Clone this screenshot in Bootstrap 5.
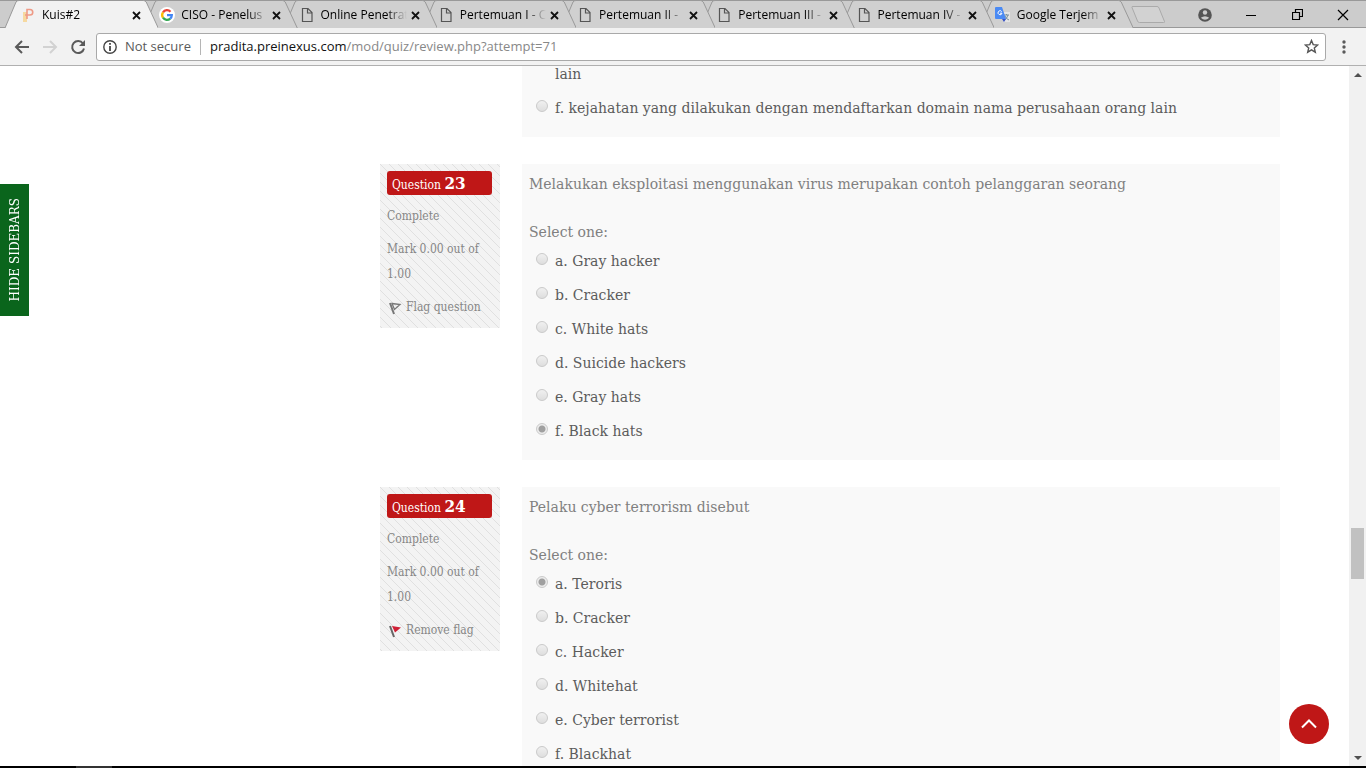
<!DOCTYPE html>
<html lang="id">
<head>
<meta charset="utf-8">
<meta name="viewport" content="width=device-width, initial-scale=1">
<title>Kuis#2</title>
<link href="https://cdn.jsdelivr.net/npm/bootstrap@5.3.0/dist/css/bootstrap.min.css" rel="stylesheet">
<style>
  :root { --slab: "Roboto Slab", "DejaVu Serif", serif; --slab-narrow: "Roboto Slab", "DejaVu Serif Condensed", serif; --ui: "Segoe UI", "Open Sans", "Noto Sans", sans-serif; --brand: #bf1717; }
  body { font-family: var(--slab); background: #fff; }
  button { background: none; border: 0; padding: 0; }
  svg { display: block; flex: none; }

  /* browser frame */
  .chrome { font-family: var(--ui); background: #f2f2f2; border-bottom: 1px solid #b0b0b0; color: #000; }
  .tabstrip { height: 28px; background: #ccc; padding-left: 5px; border-top: 1px solid #999; box-shadow: inset 0 -1px #999; }
  .tab-item { position: relative; flex: 1 1 0; min-width: 0; height: 28px; margin: -1px -14px 0 0; padding: 2px 17px 0 15px; font-size: 12px; line-height: 26px; }
  .tab-item:nth-child(1) { z-index: 9; }
  .tab-item:nth-child(2) { z-index: 8; }
  .tab-item:nth-child(3) { z-index: 7; }
  .tab-item:nth-child(4) { z-index: 6; }
  .tab-item:nth-child(5) { z-index: 5; }
  .tab-item:nth-child(6) { z-index: 4; }
  .tab-item:nth-child(7) { z-index: 3; }
  .tab-item:nth-child(8) { z-index: 2; margin-right: 0; }
  .tab-shape { position: absolute; inset: 0; width: 100%; height: 28px; z-index: -1; }
  .tab-title { flex: 1 1 0; min-width: 0; overflow: hidden; white-space: nowrap; color: #000; text-decoration: none; margin: 0 4px 0 6px; -webkit-mask-image: linear-gradient(90deg, #000 calc(100% - 20px), transparent); mask-image: linear-gradient(90deg, #000 calc(100% - 20px), transparent); }
  .win-controls { flex: none; width: 235px; margin-left: -2px; }
  .win-btn { width: 46px; height: 26px; display: flex; align-items: center; justify-content: center; }
  .toolbar { height: 37px; padding: 0 14px 0 13px; gap: 10px; }
  .menu-btn { width: 16px; }
  .omnibox { height: 28px; background: #fff; border: 1px solid #a9a9a9; border-radius: 3px; font-size: 13px; padding: 0 6px; color: #5a5a5a; margin-left: -1px; }
  .omnibox .divider { width: 1px; height: 16px; background: #b5b5b5; margin: 0 9px; }
  .address { color: #888; text-decoration: none; }
  .address span { color: #111; }

  /* page */
  .viewport { position: relative; min-height: 0; }
  .review { overflow: hidden; padding: 0 69px 0 380px; }
  .question { margin-bottom: 27px; gap: 22px; }
  .question:first-child { margin-top: -9px; }
  .q-info { flex: 0 0 120px; padding: 7px 7px 8px; font-size: 12px; line-height: 25px; color: #868686; background: linear-gradient(45deg, transparent 45%, #e0e0e0 45%, #e0e0e0 55%, transparent 55%) 0 0 / 9px 9px #f3f3f3; font-family: var(--slab-narrow); }
  .q-info p { margin: 0 0 8px; }
  .q-no { background: var(--brand); color: #fff; border-radius: 3px; height: 24px; padding-left: 5px; margin: 0 1px 9px 0; font-size: 12px; line-height: 25px; font-weight: 500; }
  .q-no span { font-size: 17px; line-height: 24px; font-weight: 700; }
  .flag { color: inherit; text-decoration: none; gap: 4px; padding-left: 2px; }
  .q-body { background: #f9f9f9; padding: 8px 7px 12px; color: #808080; font-size: 14px; line-height: 24px; min-width: 0; }
  .q-body.tail { padding-top: 0; }
  .q-text { margin: 0 0 24px; }
  .answers { padding-left: 7px; }
  .answer { line-height: 34px; gap: 7px; color: #5c5c5c; }
  .answer input { appearance: none; flex: none; width: 12px; height: 12px; margin: 0 0 5px; border: 1px solid #cacaca; border-radius: 50%; background: linear-gradient(#f0f0f0, #dedede); opacity: 1; }
  .answer input:checked { background: radial-gradient(circle, #a0a0a0 0 3px, #ededed 4px); }
  .answer label { opacity: 1; }
  .wrapped { padding-left: 19px; }
  .hide-side { position: absolute; left: 0; top: 118px; width: 29px; height: 132px; background: #0a651c; color: #fff; font-size: 12px; writing-mode: vertical-rl; }
  .hide-side span { transform: rotate(180deg); }
  .to-top { position: absolute; right: 37px; bottom: 22px; width: 40px; height: 40px; border-radius: 50%; background: var(--brand); }
  .scroll-rail { position: relative; flex: 0 0 17px; background: #f1f1f1; padding: 7px 0 6px; }
  .scroll-thumb { position: absolute; top: 66%; left: 2px; width: 13px; height: 51px; background: #c1c1c1; }
  .taskbar { flex: none; height: 2px; background: #000; padding-left: 76px; }
  .taskbar div { width: 36px; height: 2px; background: #333; }
</style>
</head>
<body class="vh-100 overflow-hidden d-flex flex-column">

<svg width="0" height="0" class="position-absolute" aria-hidden="true">
  <defs>
    <g id="tab"><path d="M0 28 L11 2 Q12 .5 14 .5 H138 Q140 .5 141 2 L153 28" stroke="#999" vector-effect="non-scaling-stroke"/></g>
    <g id="x"><path d="M1 1 L8 8 M8 1 L1 8" stroke="#111" stroke-width="1.8"/></g>
    <g id="page"><path d="M3.500 1.500 H9 L13 5.500 V14.500 H3.500 Z M8.500 1.500 V6 H13" fill="none" stroke="#555" stroke-width="1.200"/></g>
  </defs>
</svg>

<header class="chrome flex-shrink-0">
  <div class="tabstrip d-flex">
    <nav class="d-flex flex-grow-1" aria-label="Tabs">
      <div class="tab-item d-flex align-items-center">
        <svg class="tab-shape" viewBox="0 0 153 28" preserveAspectRatio="none" fill="#f2f2f2"><use href="#tab"/></svg>
        <svg width="16" height="16"><path d="M3 5h4v10H3z" fill="#f6d9a0"/><path d="M7 12V2.500h3a2.700 2.700 0 0 1 0 5.500H5" fill="none" stroke="#ee9a86" stroke-width="1.600"/></svg>
        <a class="tab-title" href="#">Kuis#2</a>
        <button aria-label="Close tab"><svg width="9" height="9"><use href="#x"/></svg></button>
      </div>
      <div class="tab-item d-flex align-items-center">
        <svg class="tab-shape" viewBox="0 0 153 28" preserveAspectRatio="none" fill="#d0d0d0"><use href="#tab"/></svg>
        <svg width="16" height="16"><circle cx="8" cy="8" r="8" fill="#fff"/><g fill="none" stroke-width="2.300"><path d="M4 5.300A4.800 4.800 0 0 1 11.500 4.700" stroke="#ea4335"/><path d="M4 5.300A4.800 4.800 0 0 0 4 10.700" stroke="#fbbc05"/><path d="M4 10.700A4.800 4.800 0 0 0 11.200 11.600" stroke="#34a853"/><path d="M8 8.200H12.800A4.800 4.800 0 0 1 11.200 11.600" stroke="#4285f4"/></g></svg>
        <a class="tab-title" href="#">CISO - Penelus</a>
        <button aria-label="Close tab"><svg width="9" height="9"><use href="#x"/></svg></button>
      </div>
      <div class="tab-item d-flex align-items-center">
        <svg class="tab-shape" viewBox="0 0 153 28" preserveAspectRatio="none" fill="#d0d0d0"><use href="#tab"/></svg>
        <svg width="16" height="16"><use href="#page"/></svg>
        <a class="tab-title" href="#">Online Penetrat</a>
        <button aria-label="Close tab"><svg width="9" height="9"><use href="#x"/></svg></button>
      </div>
      <div class="tab-item d-flex align-items-center">
        <svg class="tab-shape" viewBox="0 0 153 28" preserveAspectRatio="none" fill="#d0d0d0"><use href="#tab"/></svg>
        <svg width="16" height="16"><use href="#page"/></svg>
        <a class="tab-title" href="#">Pertemuan I - C</a>
        <button aria-label="Close tab"><svg width="9" height="9"><use href="#x"/></svg></button>
      </div>
      <div class="tab-item d-flex align-items-center">
        <svg class="tab-shape" viewBox="0 0 153 28" preserveAspectRatio="none" fill="#d0d0d0"><use href="#tab"/></svg>
        <svg width="16" height="16"><use href="#page"/></svg>
        <a class="tab-title" href="#">Pertemuan II - </a>
        <button aria-label="Close tab"><svg width="9" height="9"><use href="#x"/></svg></button>
      </div>
      <div class="tab-item d-flex align-items-center">
        <svg class="tab-shape" viewBox="0 0 153 28" preserveAspectRatio="none" fill="#d0d0d0"><use href="#tab"/></svg>
        <svg width="16" height="16"><use href="#page"/></svg>
        <a class="tab-title" href="#">Pertemuan III - </a>
        <button aria-label="Close tab"><svg width="9" height="9"><use href="#x"/></svg></button>
      </div>
      <div class="tab-item d-flex align-items-center">
        <svg class="tab-shape" viewBox="0 0 153 28" preserveAspectRatio="none" fill="#d0d0d0"><use href="#tab"/></svg>
        <svg width="16" height="16"><use href="#page"/></svg>
        <a class="tab-title" href="#">Pertemuan IV - </a>
        <button aria-label="Close tab"><svg width="9" height="9"><use href="#x"/></svg></button>
      </div>
      <div class="tab-item d-flex align-items-center">
        <svg class="tab-shape" viewBox="0 0 153 28" preserveAspectRatio="none" fill="#d0d0d0"><use href="#tab"/></svg>
        <svg width="16" height="16"><path d="M7 5h8v10H9z" fill="#e4e4e4"/><path d="M9 8h5M11.500 7v1M13 8q-1 4-4 5M10 9q1 3 4 4" fill="none" stroke="#78909c"/><path d="M1 0h6l4 12H1Q0 12 0 11V1Q0 0 1 0z" fill="#4a8af4"/><path d="M7 12h4l-2 3z" fill="#3a53c5"/><path d="M6.700 4.600A2 2 0 1 0 7 6.200H5" fill="none" stroke="#fff"/></svg>
        <a class="tab-title" href="#">Google Terjem</a>
        <button aria-label="Close tab"><svg width="9" height="9"><use href="#x"/></svg></button>
      </div>
    </nav>
    <div class="win-controls d-flex align-items-center">
      <button class="me-auto" aria-label="New tab"><svg width="36" height="20" viewBox="0 0 36 20"><path d="M1 2.500Q.5 1.500 2 1.500H26Q27.500 1.500 28 3L33.500 16.500Q34 17.500 32.500 17.500H8.500Q7 17.500 6.500 16Z" fill="#d2d2d2" stroke="#aaa"/></svg></button>
      <button class="win-btn" aria-label="Profile"><svg width="14" height="14"><circle cx="7" cy="7" r="6.800" fill="#555"/><circle cx="7" cy="4.500" r="2.200" fill="#ccc"/><path d="M2.800 9.800Q7 6.500 11.200 9.800Q7 13.500 2.800 9.800Z" fill="#ccc"/></svg></button>
      <button class="win-btn" aria-label="Minimize"><svg width="12" height="12"><path d="M1 6.500H11" stroke="#000"/></svg></button>
      <button class="win-btn" aria-label="Restore"><svg width="11" height="11"><path d="M.5 3.500h7v7h-7zM3.500 3V.5h7v7H8" fill="none" stroke="#000" stroke-width="1.200"/></svg></button>
      <button class="win-btn" aria-label="Close"><svg width="12" height="12"><path d="M1 1 11 11M11 1 1 11" stroke="#000" stroke-width="1.200"/></svg></button>
    </div>
  </div>
  <div class="toolbar d-flex align-items-center">
    <button aria-label="Back"><svg width="18" height="16"><path d="M16 8H3M9 2 3 8l6 6" fill="none" stroke="#5a5a5a" stroke-width="2"/></svg></button>
    <button aria-label="Forward"><svg width="18" height="16"><path d="M2 8H15M9 2l6 6-6 6" fill="none" stroke="#d2d2d2" stroke-width="2"/></svg></button>
    <button aria-label="Reload"><svg width="18" height="16"><path d="M14 4.500A6 6 0 1 0 15 9.500" fill="none" stroke="#5a5a5a" stroke-width="2"/><path d="M16 1V7H10Z" fill="#5a5a5a"/></svg></button>
    <div class="omnibox d-flex align-items-center flex-grow-1">
      <svg width="14" height="14"><circle cx="7" cy="7" r="6.200" fill="none" stroke="#444" stroke-width="1.400"/><path d="M7 6v5M7 3v1.800" stroke="#444" stroke-width="1.800"/></svg>
      <span class="ms-1 ps-1">Not secure</span>
      <span class="divider"></span>
      <a class="address flex-grow-1" href="#"><span>pradita.preinexus.com</span>/mod/quiz/review.php?attempt=71</a>
      <button aria-label="Bookmark"><svg width="15" height="15" viewBox="0 0 15 15"><path d="M7.500 1.500 9.200 5.600 13.700 6 10.300 8.900 11.300 13.200 7.500 10.900 3.700 13.200 4.700 8.900 1.300 6 5.800 5.600Z" fill="none" stroke="#555" stroke-width="1.400"/></svg></button>
    </div>
    <button class="menu-btn d-flex justify-content-center" aria-label="Menu"><svg width="4" height="14" fill="#5a5a5a"><circle cx="2" cy="2" r="1.700"/><circle cx="2" cy="7" r="1.700"/><circle cx="2" cy="12" r="1.700"/></svg></button>
  </div>
</header>

<div class="viewport d-flex flex-grow-1">
  <main class="review flex-grow-1">
    <article class="question d-flex align-items-start">
      <div class="q-info invisible py-0"></div>
      <div class="q-body tail flex-grow-1">
        <div class="answers">
          <div class="answer wrapped">lain</div>
          <div class="answer d-flex align-items-center"><input type="radio" name="q22" id="q22f" disabled><label for="q22f">f. kejahatan yang dilakukan dengan mendaftarkan domain nama perusahaan orang lain</label></div>
        </div>
      </div>
    </article>

    <article class="question d-flex align-items-start">
      <div class="q-info">
        <h3 class="q-no">Question <span>23</span></h3>
        <p>Complete</p>
        <p>Mark 0.00 out of 1.00</p>
        <a class="flag d-flex align-items-center" href="#"><svg width="13" height="14"><path d="M1 2 5 13" stroke="#777" stroke-width="2"/><path d="M3 2.500 11 3.500 5.500 8.500Z" fill="none" stroke="#777" stroke-width="1.300"/></svg>Flag question</a>
      </div>
      <div class="q-body flex-grow-1">
        <p class="q-text">Melakukan eksploitasi menggunakan virus merupakan contoh pelanggaran seorang</p>
        <div>Select one:</div>
        <div class="answers">
          <div class="answer d-flex align-items-center"><input type="radio" name="q23" id="q23a" disabled><label for="q23a">a. Gray hacker</label></div>
          <div class="answer d-flex align-items-center"><input type="radio" name="q23" id="q23b" disabled><label for="q23b">b. Cracker</label></div>
          <div class="answer d-flex align-items-center"><input type="radio" name="q23" id="q23c" disabled><label for="q23c">c. White hats</label></div>
          <div class="answer d-flex align-items-center"><input type="radio" name="q23" id="q23d" disabled><label for="q23d">d. Suicide hackers</label></div>
          <div class="answer d-flex align-items-center"><input type="radio" name="q23" id="q23e" disabled><label for="q23e">e. Gray hats</label></div>
          <div class="answer d-flex align-items-center"><input type="radio" name="q23" id="q23f" disabled checked><label for="q23f">f. Black hats</label></div>
        </div>
      </div>
    </article>

    <article class="question d-flex align-items-start">
      <div class="q-info">
        <h3 class="q-no">Question <span>24</span></h3>
        <p>Complete</p>
        <p>Mark 0.00 out of 1.00</p>
        <a class="flag d-flex align-items-center" href="#"><svg width="13" height="14"><path d="M1 2 5 13" stroke="#666" stroke-width="2"/><path d="M3 2 12 3.500 6 8.500Z" fill="#cf1f35"/></svg>Remove flag</a>
      </div>
      <div class="q-body flex-grow-1">
        <p class="q-text">Pelaku cyber terrorism disebut</p>
        <div>Select one:</div>
        <div class="answers">
          <div class="answer d-flex align-items-center"><input type="radio" name="q24" id="q24a" disabled checked><label for="q24a">a. Teroris</label></div>
          <div class="answer d-flex align-items-center"><input type="radio" name="q24" id="q24b" disabled><label for="q24b">b. Cracker</label></div>
          <div class="answer d-flex align-items-center"><input type="radio" name="q24" id="q24c" disabled><label for="q24c">c. Hacker</label></div>
          <div class="answer d-flex align-items-center"><input type="radio" name="q24" id="q24d" disabled><label for="q24d">d. Whitehat</label></div>
          <div class="answer d-flex align-items-center"><input type="radio" name="q24" id="q24e" disabled><label for="q24e">e. Cyber terrorist</label></div>
          <div class="answer d-flex align-items-center"><input type="radio" name="q24" id="q24f" disabled><label for="q24f">f. Blackhat</label></div>
        </div>
      </div>
    </article>
  </main>

  <div class="scroll-rail d-flex flex-column justify-content-between align-items-center">
    <svg width="8" height="4"><path d="M0 4 4 0 8 4Z" fill="#505050"/></svg>
    <div class="scroll-thumb"></div>
    <svg width="8" height="4"><path d="M0 0H8L4 4Z" fill="#505050"/></svg>
  </div>
  <button class="hide-side d-flex align-items-center justify-content-center"><span>HIDE SIDEBARS</span></button>
  <button class="to-top d-flex align-items-center justify-content-center" aria-label="Back to top"><svg width="18" height="12"><path d="M2 9.500 9 2.500l7 7" fill="none" stroke="#fff" stroke-width="2"/></svg></button>
</div>

<div class="taskbar"><div></div></div>

<script src="https://cdn.jsdelivr.net/npm/bootstrap@5.3.0/dist/js/bootstrap.bundle.min.js"></script>
</body>
</html>
